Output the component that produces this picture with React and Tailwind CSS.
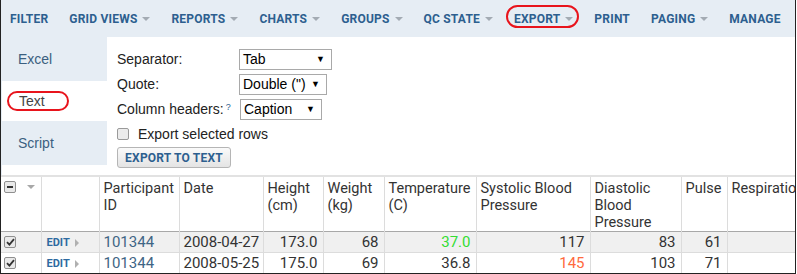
import React from "react";

const navItems = [
  { label: "Filter", menu: false },
  { label: "Grid Views", menu: true },
  { label: "Reports", menu: true },
  { label: "Charts", menu: true },
  { label: "Groups", menu: true },
  { label: "QC State", menu: true },
  { label: "Export", menu: true, marked: true },
  { label: "Print", menu: false },
  { label: "Paging", menu: true },
  { label: "Manage", menu: false },
];

const columns = [
  { w: 40 },
  { w: 58 },
  { w: 80, title: ["Participant", "ID"] },
  { w: 84, title: ["Date"] },
  { w: 60, title: ["Height", "(cm)"] },
  { w: 61, title: ["Weight", "(kg)"] },
  { w: 92, title: ["Temperature", "(C)"] },
  { w: 114, title: ["Systolic Blood", "Pressure"] },
  { w: 91, title: ["Diastolic", "Blood", "Pressure"] },
  { w: 46, title: ["Pulse"] },
  { w: 90, title: ["Respiration"] },
];

const rows = [
  {
    id: "101344",
    date: "2008-04-27",
    height: "173.0",
    weight: "68",
    temp: "37.0",
    tempColor: "text-[#33dd33]",
    sys: "117",
    sysColor: "text-[#333]",
    dia: "83",
    pulse: "61",
    shade: true,
  },
  {
    id: "101344",
    date: "2008-05-25",
    height: "175.0",
    weight: "69",
    temp: "36.8",
    tempColor: "text-[#333]",
    sys: "145",
    sysColor: "text-[#ff6a3d]",
    dia: "103",
    pulse: "71",
    shade: false,
  },
];

const Caret = () => (
  <span className="ml-[5px] inline-block h-0 w-0 border-x-[4px] border-t-[4px] border-x-transparent border-t-[#a3abb3]" />
);

const Select = ({ value, width }) => (
  <div
    className={`flex h-[21px] items-center justify-between border border-[#a9a9a9] bg-white pl-[3px] pr-[6px] text-[14px] text-black ${width}`}
  >
    <span>{value}</span>
    <span className="text-[9px]">▼</span>
  </div>
);

const CheckIcon = () => (
  <span className="flex h-[12px] w-[12px] items-center justify-center rounded-[2px] border border-[#8f8f8f] bg-[#e9e9e9]">
    <svg width="9" height="8" viewBox="0 0 9 8">
      <path d="M1 4.2 L3.4 6.6 L8 1.2" fill="none" stroke="#333" strokeWidth="1.8" />
    </svg>
  </span>
);

export default function App() {
  return (
    <div className="w-[796px] h-[274px] overflow-hidden border-x border-b border-[#222] bg-white font-['Roboto',sans-serif]">
      {/* toolbar */}
      <div className="flex h-[37px] items-center gap-[21px] bg-[#e6edf4] pl-[9px] text-[12px] font-bold uppercase tracking-[0.2px] text-[#2d5f8f]">
        {navItems.map((item) => (
          <div key={item.label} className="relative flex items-center">
            <span>{item.label}</span>
            {item.menu && <Caret />}
            {item.marked && (
              <span className="absolute left-[-8px] top-[-5px] h-[23px] w-[73px] rounded-full border-2 border-[#e8141c]" />
            )}
          </div>
        ))}
      </div>

      {/* export panel */}
      <div className="flex h-[138px] font-['Liberation_Sans',sans-serif] text-[14px]">
        <div className="flex w-[106px] flex-col bg-[#e6edf4] pl-[1px] text-[#3b5f80]">
          <div className="flex h-[44px] items-center pl-[16px]">Excel</div>
          <div className="relative flex h-[40px] items-center bg-white pl-[17px] text-[#444]">
            Text
            <span className="absolute left-[5px] top-[10px] h-[20px] w-[62px] rounded-full border-2 border-[#e8141c]" />
          </div>
          <div className="flex h-[44px] items-center pl-[16px]">Script</div>
          <div className="flex-1 bg-white" />
        </div>
        <div className="flex-1 pl-[10px] pt-[12px] text-[#222]">
          <div className="flex flex-col gap-[4px]">
            <div className="flex items-center">
              <span className="w-[122px]">Separator:</span>
              <Select value="Tab" width="w-[93px]" />
            </div>
            <div className="flex items-center">
              <span className="w-[122px]">Quote:</span>
              <Select value='Double (")' width="w-[88px]" />
            </div>
            <div className="flex items-center">
              <span className="w-[123px]">
                Column headers:<sup className="ml-[2px] text-[9px] text-[#2d5f8f]">?</sup>
              </span>
              <Select value="Caption" width="w-[82px]" />
            </div>
          </div>
          <div className="mt-[4px] flex h-[20px] items-center">
            <span className="h-[12px] w-[12px] rounded-[2px] border border-[#9a9a9a] bg-[#ececec]" />
            <span className="ml-[9px]">Export selected rows</span>
          </div>
          <button className="mt-[3px] h-[21px] w-[114px] rounded-[3px] border border-[#b5b5b5] bg-gradient-to-b from-[#fafafa] to-[#e4e4e4] font-['Roboto',sans-serif] text-[12px] font-bold tracking-[0.2px] text-[#2d5f8f]">
            EXPORT TO TEXT
          </button>
        </div>
      </div>

      {/* grid */}
      <table className="w-[816px] table-fixed border-collapse border-t-2 border-[#e2e2e2] text-[#333]">
        <colgroup>
          {columns.map((c, i) => (
            <col key={i} style={{ width: c.w }} />
          ))}
        </colgroup>
        <thead>
          <tr className="h-[55px] border-b border-[#a8a8a8]">
            <th className="border-r border-[#dcdcdc] pl-[3px] pt-[4px] align-top">
              <div className="flex items-center">
                <span className="flex h-[12px] w-[12px] items-center justify-center rounded-[2px] border border-[#8f8f8f] bg-[#e9e9e9]">
                  <span className="h-[2px] w-[6px] bg-[#333]" />
                </span>
                <span className="ml-[11px] h-0 w-0 border-x-[4px] border-t-[4px] border-x-transparent border-t-[#a8a8a8]" />
              </div>
            </th>
            {columns.slice(1).map((c, i) => (
              <th
                key={i}
                className="overflow-hidden border-r border-[#dcdcdc] pl-[4px] pt-[3px] text-left align-top text-[14.5px] font-normal leading-[17px] whitespace-nowrap"
              >
                {c.title && c.title.map((t) => <div key={t}>{t}</div>)}
              </th>
            ))}
          </tr>
        </thead>
        <tbody className="text-[15px]">
          {rows.map((r) => (
            <tr
              key={r.date}
              className={`h-[20px] border-b border-[#dcdcdc] leading-[18px] ${r.shade ? "bg-[#f0f0f0]" : "bg-white"}`}
            >
              <td className="border-r border-[#dcdcdc] pl-[3px] align-middle">
                <CheckIcon />
              </td>
              <td className="border-r border-[#dcdcdc] pl-[5px] pt-[2px]">
                <span className="flex items-center text-[11px] font-bold text-[#2d6aa0]">
                  EDIT
                  <span className="ml-[5px] h-0 w-0 border-y-[4px] border-l-[4px] border-y-transparent border-l-[#b0b0b0]" />
                </span>
              </td>
              <td className="border-r border-[#dcdcdc] pl-[4px] text-[#3f6585]">{r.id}</td>
              <td className="border-r border-[#dcdcdc] pl-[4px]">{r.date}</td>
              <td className="border-r border-[#dcdcdc] pr-[5px] text-right">{r.height}</td>
              <td className="border-r border-[#dcdcdc] pr-[5px] text-right">{r.weight}</td>
              <td className={`border-r border-[#dcdcdc] pr-[5px] text-right ${r.tempColor}`}>{r.temp}</td>
              <td className={`border-r border-[#dcdcdc] pr-[5px] text-right ${r.sysColor}`}>{r.sys}</td>
              <td className="border-r border-[#dcdcdc] pr-[5px] text-right">{r.dia}</td>
              <td className="border-r border-[#dcdcdc] pr-[5px] text-right">{r.pulse}</td>
              <td />
            </tr>
          ))}
        </tbody>
      </table>
    </div>
  );
}
